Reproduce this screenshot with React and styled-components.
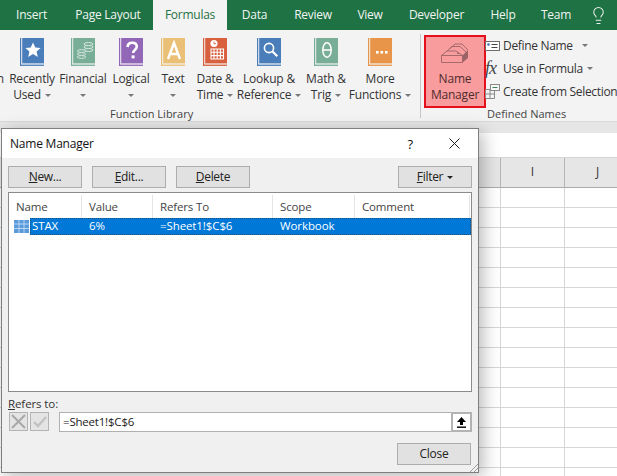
import React from 'react';
import styled, { createGlobalStyle } from 'styled-components';
import { Lightbulb } from 'lucide-react';

const GlobalStyle = createGlobalStyle`
html, body { margin: 0; padding: 0; }
body { width: 617px; height: 476px; overflow: hidden; background: #fff; font-family: "Open Sans", "Noto Sans", "Liberation Sans", sans-serif; font-size: 12px; color: #333; }
`;

const Page = styled.div`
position: relative;
width: 617px;
height: 476px;
overflow: hidden;
display: flex;
flex-direction: column;
`;

const TabBar = styled.div`
height: 30px;
flex: none;
background: #1f7244;
display: flex;
position: relative;
`;
const Tab = styled.div`
width: ${(p) => p.$w}px;
flex: none;
text-align: center;
line-height: 30px;
font-size: 12px;
letter-spacing: -0.25px;
color: ${(p) => (p.$active ? '#1f7244' : '#f0f5f2')};
background: ${(p) => (p.$active ? '#f3f3f3' : 'transparent')};
`;
const Bulb = styled.div`
width: 24px;
margin-left: 3px;
display: flex;
align-items: center;
justify-content: center;
color: #e9f1ec;
`;

const Ribbon = styled.div`
height: 92px;
flex: none;
background: #f3f3f3;
border-bottom: 1px solid #d9d9d9;
box-sizing: border-box;
display: flex;
overflow: hidden;
`;
const Group = styled.div`
width: ${(p) => p.$w}px;
flex: none;
display: flex;
flex-direction: column;
`;
const GroupBody = styled.div`
height: 77px;
flex: none;
display: flex;
box-sizing: border-box;
`;
const GroupLabel = styled.div`
height: 15px;
line-height: 14px;
font-size: 11px;
color: #444;
padding-left: ${(p) => p.$left || 0}px;
`;
const Separator = styled.div`
width: 1px;
flex: none;
height: 84px;
margin: 4px 3px 0 0;
background: #c6c6c6;
`;
const Command = styled.div`
width: ${(p) => p.$w}px;
flex: none;
display: flex;
flex-direction: column;
align-items: center;
padding-top: 8px;
box-sizing: border-box;
`;
const ClippedCommand = styled(Command)`
align-items: flex-end;
padding-right: 6px;
`;
const IconSlot = styled.div`
height: 28px;
flex: none;
display: flex;
justify-content: center;
`;
const CommandText = styled.div`
margin-top: ${(p) => p.$gap ?? 5}px;
line-height: 16px;
font-size: 12px;
letter-spacing: -0.2px;
text-align: center;
white-space: nowrap;
display: flex;
flex-direction: column;
align-items: center;
`;
const Caret = styled.span`
display: inline-block;
width: 0;
height: 0;
margin-left: ${(p) => p.$gap ?? 4}px;
vertical-align: middle;
border-left: 3px solid transparent;
border-right: 3px solid transparent;
border-top: 3px solid ${(p) => p.$color || '#777'};
`;
const LoneCaret = styled.div`
height: 16px;
display: flex;
align-items: center;
`;

const NameManagerButton = styled.div`
width: 62px;
height: 73px;
flex: none;
margin-top: 5px;
box-sizing: border-box;
background: #f89c9e;
border: 2px solid #e5101c;
display: flex;
flex-direction: column;
align-items: center;
padding-top: 6px;
color: #4f2b2c;
`;
const DefinedList = styled.div`
display: flex;
flex-direction: column;
padding-top: 4px;
flex: none;
margin-left: -1px;
`;
const DefinedRow = styled.div`
height: 23px;
display: flex;
align-items: center;
white-space: nowrap;
font-size: 12px;
letter-spacing: -0.32px;
`;
const DefinedIcon = styled.div`
width: 18px;
flex: none;
display: flex;
align-items: center;
`;

const FormulaBand = styled.div`
height: 36px;
flex: none;
background: #fff;
border-top: 11px solid #e6e6e6;
border-bottom: 1px solid #d4d4d4;
box-sizing: border-box;
`;
const HeaderBand = styled.div`
height: 30px;
flex: none;
background: #e6e6e6;
border-bottom: 1px solid #ababab;
box-sizing: border-box;
display: flex;
padding-left: 500px;
`;
const ColHead = styled.div`
width: ${(p) => p.$w}px;
flex: none;
box-sizing: border-box;
border-left: 1px solid #b5b5b5;
text-align: center;
line-height: 28px;
font-size: 12px;
`;
const Sheet = styled.div`
flex: 1;
background-color: #fff;
background-image:
  linear-gradient(to bottom, #d6d6d6 1px, transparent 1px),
  linear-gradient(to right, #d6d6d6 1px, transparent 1px),
  linear-gradient(to right, #d6d6d6 1px, transparent 1px);
background-size: 100% 20px, 1px 100%, 1px 100%;
background-position: 0 19px, 500px 0, 564px 0;
background-repeat: repeat-y, no-repeat, no-repeat;
`;

const Dialog = styled.div`
position: absolute;
left: 1px;
top: 128px;
width: 478px;
height: 345px;
box-sizing: border-box;
background: #f0f0f0;
border: 1px solid #7e7e7e;
box-shadow: 4px 4px 16px rgba(0, 0, 0, 0.28);
display: flex;
flex-direction: column;
`;
const TitleBar = styled.div`
height: 29px;
flex: none;
background: #fff;
display: flex;
align-items: center;
padding: 0 18px 0 8px;
color: #111;
font-size: 12px;
letter-spacing: -0.22px;
`;
const TitleText = styled.div`
flex: 1;
`;
const HelpMark = styled.div`
margin-right: 36px;
font-size: 13px;
`;
const Toolbar = styled.div`
display: flex;
gap: 10px;
padding: 8px 6px 0;
height: 23px;
flex: none;
box-sizing: content-box;
`;
const DialogButton = styled.div`
width: ${(p) => p.$w || 74}px;
height: 22px;
flex: none;
box-sizing: border-box;
background: #e1e1e1;
border: 1px solid #adadad;
text-align: center;
line-height: 20px;
font-size: 12px;
letter-spacing: -0.3px;
color: #222;
margin-left: ${(p) => (p.$push ? 'auto' : 0)};
`;
const ListBox = styled.div`
margin: 3px 6px 0;
height: 200px;
flex: none;
box-sizing: border-box;
background: #fff;
border: 1px solid #8b8b8b;
`;
const ListHead = styled.div`
height: 25px;
display: flex;
`;
const HeadCell = styled.div`
width: ${(p) => p.$w}px;
flex: none;
box-sizing: border-box;
padding-left: ${(p) => p.$pad || 7}px;
margin: 2px 0 0;
border-right: 1px solid #e5e5e5;
line-height: 23px;
font-size: 11.5px;
letter-spacing: -0.15px;
color: #444;
`;
const ListRow = styled.div`
height: 17px;
display: flex;
padding-left: 5px;
`;
const RowIcon = styled.div`
width: 16px;
flex: none;
display: flex;
align-items: center;
`;
const RowBody = styled.div`
flex: 1;
display: flex;
background: #0078d7;
outline: 1px dotted #1b4f7a;
outline-offset: -1px;
color: #fff;
`;
const RowCell = styled.div`
width: ${(p) => p.$w}px;
flex: none;
box-sizing: border-box;
padding-left: ${(p) => p.$pad || 7}px;
line-height: 16px;
font-size: 11.5px;
letter-spacing: -0.1px;
`;
const RefersLabel = styled.div`
margin: 3px 6px 0;
height: 17px;
line-height: 17px;
font-size: 11.5px;
letter-spacing: -0.1px;
color: #333;
`;
const RefersRow = styled.div`
display: flex;
align-items: flex-start;
margin: 0 6px;
height: 20px;
flex: none;
`;
const MarkButton = styled.div`
width: 19px;
height: 19px;
flex: none;
margin: 0 2px 0 ${(p) => p.$left || 0}px;
box-sizing: border-box;
background: #e4e4e4;
border: 1px solid #b3b3b3;
display: flex;
align-items: center;
justify-content: center;
`;
const RefInput = styled.div`
margin-left: 8px;
flex: 1;
height: 20px;
box-sizing: border-box;
background: #fff;
border: 1px solid #b0b0b0;
border-right: none;
padding-left: 3px;
line-height: 18px;
font-size: 11.5px;
letter-spacing: -0.2px;
color: #222;
`;
const CollapseButton = styled.div`
width: 21px;
height: 20px;
flex: none;
box-sizing: border-box;
background: #fff;
border: 2px solid #b3b3b3;
display: flex;
align-items: center;
justify-content: center;
`;
const Footer = styled.div`
display: flex;
justify-content: flex-end;
padding: 11px 7px 0;
`;
const Grip = styled.svg`
position: absolute;
right: 0;
bottom: 0;
`;
const FxText = styled.span`
font-family: "Liberation Serif", serif;
font-style: italic;
font-size: 18px;
line-height: 15px;
letter-spacing: -1px;
color: #444;
`;

const Book = ({ color, children }) => (
  <svg width="24" height="28" viewBox="0 0 24 28">
    <rect x="0" y="0" width="1.2" height="28" fill={color} />
    <rect x="2.2" y="0" width="21.8" height="25.4" fill={color} />
    <rect x="1" y="26.6" width="23" height="1.3" fill={color} />
    {children}
  </svg>
);

const tabs = [
  ['Insert', 63], ['Page Layout', 90], ['Formulas', 74, true], ['Data', 55],
  ['Review', 62], ['View', 52], ['Developer', 81], ['Help', 52], ['Team', 54],
];

const StarBook = () => (
  <Book color="#4a7ebb">
    <path d="M13 4.5l2.3 5 5.3.5-4 3.6 1.2 5.3-4.8-2.8-4.8 2.8 1.2-5.3-4-3.6 5.3-.5z" fill="#fff" />
  </Book>
);
const CoinBook = () => (
  <Book color="#78ad98">
    <g fill="#78ad98" stroke="#d5e6df" strokeWidth="1">
      <ellipse cx="17.5" cy="12" rx="4.6" ry="1.5" />
      <ellipse cx="17.5" cy="9" rx="4.6" ry="1.5" />
      <ellipse cx="17.5" cy="6" rx="4.6" ry="1.5" />
      <ellipse cx="10.5" cy="19" rx="4.2" ry="1.4" />
      <ellipse cx="10.5" cy="16" rx="4.2" ry="1.4" />
      <ellipse cx="10.5" cy="13" rx="4.2" ry="1.4" />
    </g>
  </Book>
);
const QuestionBook = () => (
  <Book color="#9367b8">
    <path d="M8.5 9c.3-3 2.3-4.3 4.7-4.3 2.7 0 4.6 1.5 4.6 3.9 0 3.4-3.7 3.4-3.7 6.4" fill="none" stroke="#fff" strokeWidth="2.6" />
    <rect x="12.6" y="17.4" width="3" height="3" fill="#fff" />
  </Book>
);
const TextBook = () => (
  <Book color="#eac077">
    <path d="M7 21L13 5l6 16M9 16h8" fill="none" stroke="#fff" strokeWidth="2.4" />
  </Book>
);
const DateBook = () => (
  <Book color="#d8603f">
    <circle cx="11" cy="5.5" r="3.6" fill="#fff" />
    <path d="M11 3.5v2.2h2" fill="none" stroke="#d8603f" strokeWidth="0.9" />
    <path d="M8 11h12.5v10H8zM8 14.3h12.5M8 17.6h12.5M11 11v10M14.2 11v10M17.4 11v10" fill="none" stroke="#fff" strokeWidth="1.1" />
  </Book>
);
const LookupBook = () => (
  <Book color="#4a7ebb">
    <circle cx="12" cy="10" r="4.6" fill="none" stroke="#fff" strokeWidth="1.6" />
    <path d="M15.5 13.5l4.8 4.8" stroke="#fff" strokeWidth="2.2" />
  </Book>
);
const ThetaBook = () => (
  <Book color="#78ad98">
    <ellipse cx="13" cy="12" rx="4.2" ry="7.2" fill="none" stroke="#fff" strokeWidth="1.5" />
    <path d="M9 12h8" stroke="#fff" strokeWidth="1.5" />
  </Book>
);
const MoreBook = () => (
  <Book color="#e8954a">
    <rect x="8" y="13" width="2.6" height="2.6" fill="#fff" />
    <rect x="12.5" y="13" width="2.6" height="2.6" fill="#fff" />
    <rect x="17" y="13" width="2.6" height="2.6" fill="#fff" />
  </Book>
);

const commands = [
  { w: 44, icon: <StarBook />, lines: ['Recently', 'Used'], inline: true },
  { w: 58, icon: <CoinBook />, lines: ['Financial'] },
  { w: 38, icon: <QuestionBook />, lines: ['Logical'] },
  { w: 46, icon: <TextBook />, lines: ['Text'] },
  { w: 38, icon: <DateBook />, lines: ['Date &', 'Time'], inline: true },
  { w: 70, icon: <LookupBook />, lines: ['Lookup &', 'Reference'], inline: true },
  { w: 44, icon: <ThetaBook />, lines: ['Math &', 'Trig'], inline: true },
  { w: 64, icon: <MoreBook />, lines: ['More', 'Functions'], inline: true },
];

const ManagerIcon = () => (
  <svg width="28" height="20" viewBox="0 0 28 20" fill="none" stroke="#9a6466" strokeWidth="0.9">
    <path d="M0.500 12.500h21v7h-21zM0.500 12.500L6 8M6 8L11 3.500H19L25 9M9 5.500L14 1H21L27 7M6 8H15L21.500 12.500" />
    <path d="M21.500 19.500L27 15V7L21.500 12.500z" fill="#9a6466" stroke="none" />
    <rect x="16" y="9.500" width="1.800" height="1.400" fill="#9a6466" stroke="none" />
  </svg>
);
const DefineIcon = () => (
  <svg width="15" height="12" viewBox="0 0 15 12" fill="none">
    <rect x="0.5" y="1.5" width="14" height="9" fill="#fff" stroke="#6d6d6d" />
    <circle cx="3.5" cy="4.5" r="1.3" fill="#3b78c2" />
    <path d="M6.5 4.5h6M6.5 7.5h6" stroke="#444" />
  </svg>
);
const SelectionIcon = () => (
  <svg width="15" height="15" viewBox="0 0 15 15" fill="none" stroke="#8a8a8a">
    <path d="M0.5 5.5h9v9h-9zM0.5 10h9M5 5.5v9" />
    <rect x="5.5" y="0.5" width="9" height="6" fill="#f7f7f7" />
    <path d="M7.5 3.5h5" stroke="#3f7f5a" />
  </svg>
);
const TableIcon = () => (
  <svg width="16" height="15" viewBox="0 0 16 15">
    <rect x="0" y="1" width="15" height="13" fill="#5a9bdc" />
    <path d="M0 5h15M0 9.5h15M5 1v13M10 1v13" stroke="#cfe3f6" strokeWidth="0.8" />
  </svg>
);

export default function App() {
  return (
    <Page>
      <GlobalStyle />
      <TabBar>
        {tabs.map(([label, w, active]) => (
          <Tab key={label} $w={w} $active={active}>{label}</Tab>
        ))}
        <Bulb><Lightbulb size={19} strokeWidth={1.3} /></Bulb>
      </TabBar>
      <Ribbon>
        <Group $w={420}>
          <GroupBody>
            <ClippedCommand $w={10}>
              <IconSlot />
              <CommandText>Function</CommandText>
            </ClippedCommand>
            {commands.map((c) => (
              <Command key={c.lines[0]} $w={c.w}>
                <IconSlot>{c.icon}</IconSlot>
                <CommandText>
                  <span>{c.lines[0]}</span>
                  {c.inline ? (
                    <span>{c.lines[1]}<Caret /></span>
                  ) : (
                    <LoneCaret><Caret $gap={0} /></LoneCaret>
                  )}
                </CommandText>
              </Command>
            ))}
          </GroupBody>
          <GroupLabel $left={110}>Function Library</GroupLabel>
        </Group>
        <Separator />
        <Group $w={193}>
          <GroupBody>
            <NameManagerButton>
              <IconSlot><ManagerIcon /></IconSlot>
              <CommandText $gap={0}>
                <span>Name</span>
                <span>Manager</span>
              </CommandText>
            </NameManagerButton>
            <DefinedList>
              <DefinedRow><DefinedIcon><DefineIcon /></DefinedIcon>Define Name<Caret $gap={9} /></DefinedRow>
              <DefinedRow><DefinedIcon><FxText>fx</FxText></DefinedIcon>Use in Formula<Caret /></DefinedRow>
              <DefinedRow><DefinedIcon><SelectionIcon /></DefinedIcon>Create from Selection</DefinedRow>
            </DefinedList>
          </GroupBody>
          <GroupLabel $left={63}>Defined Names</GroupLabel>
        </Group>
      </Ribbon>
      <FormulaBand />
      <HeaderBand>
        <ColHead $w={64}>I</ColHead>
        <ColHead $w={66}>J</ColHead>
      </HeaderBand>
      <Sheet />

      <Dialog>
        <TitleBar>
          <TitleText>Name Manager</TitleText>
          <HelpMark>?</HelpMark>
          <svg width="11" height="11" viewBox="0 0 11 11"><path d="M0.5 0.5l10 10M10.5 0.5l-10 10" stroke="#222" /></svg>
        </TitleBar>
        <Toolbar>
          <DialogButton><u>N</u>ew...</DialogButton>
          <DialogButton><u>E</u>dit...</DialogButton>
          <DialogButton><u>D</u>elete</DialogButton>
          <DialogButton $push><u>F</u>ilter<Caret $color="#222" /></DialogButton>
        </Toolbar>
        <ListBox>
          <ListHead>
            <HeadCell $w={73}>Name</HeadCell>
            <HeadCell $w={71}>Value</HeadCell>
            <HeadCell $w={120}>Refers To</HeadCell>
            <HeadCell $w={82}>Scope</HeadCell>
            <HeadCell $w={115}>Comment</HeadCell>
          </ListHead>
          <ListRow>
            <RowIcon><TableIcon /></RowIcon>
            <RowBody>
              <RowCell $w={52} $pad={2}>STAX</RowCell>
              <RowCell $w={71}>6%</RowCell>
              <RowCell $w={120}>=Sheet1!$C$6</RowCell>
              <RowCell $w={82}>Workbook</RowCell>
            </RowBody>
          </ListRow>
        </ListBox>
        <RefersLabel><u>R</u>efers to:</RefersLabel>
        <RefersRow>
          <MarkButton $left={1}>
            <svg width="15" height="15" viewBox="0 0 15 15"><path d="M1 1l13 13M14 1L1 14" stroke="#a8a8a8" strokeWidth="2" /></svg>
          </MarkButton>
          <MarkButton>
            <svg width="15" height="15" viewBox="0 0 15 15" fill="none"><path d="M2 8l4 4 8-9" stroke="#c2c2c2" strokeWidth="2.4" /></svg>
          </MarkButton>
          <RefInput>=Sheet1!$C$6</RefInput>
          <CollapseButton>
            <svg width="11" height="11" viewBox="0 0 11 11"><path d="M5.5 0L10 5H7v3H4V5H1z" fill="#000" /><rect x="1" y="9.5" width="9" height="1.4" fill="#000" /></svg>
          </CollapseButton>
        </RefersRow>
        <Footer>
          <DialogButton>Close</DialogButton>
        </Footer>
        <Grip width="9" height="9" viewBox="0 0 9 9"><path d="M9 1L1 9M9 5L5 9" stroke="#9a9a9a" /></Grip>
      </Dialog>
    </Page>
  );
}
